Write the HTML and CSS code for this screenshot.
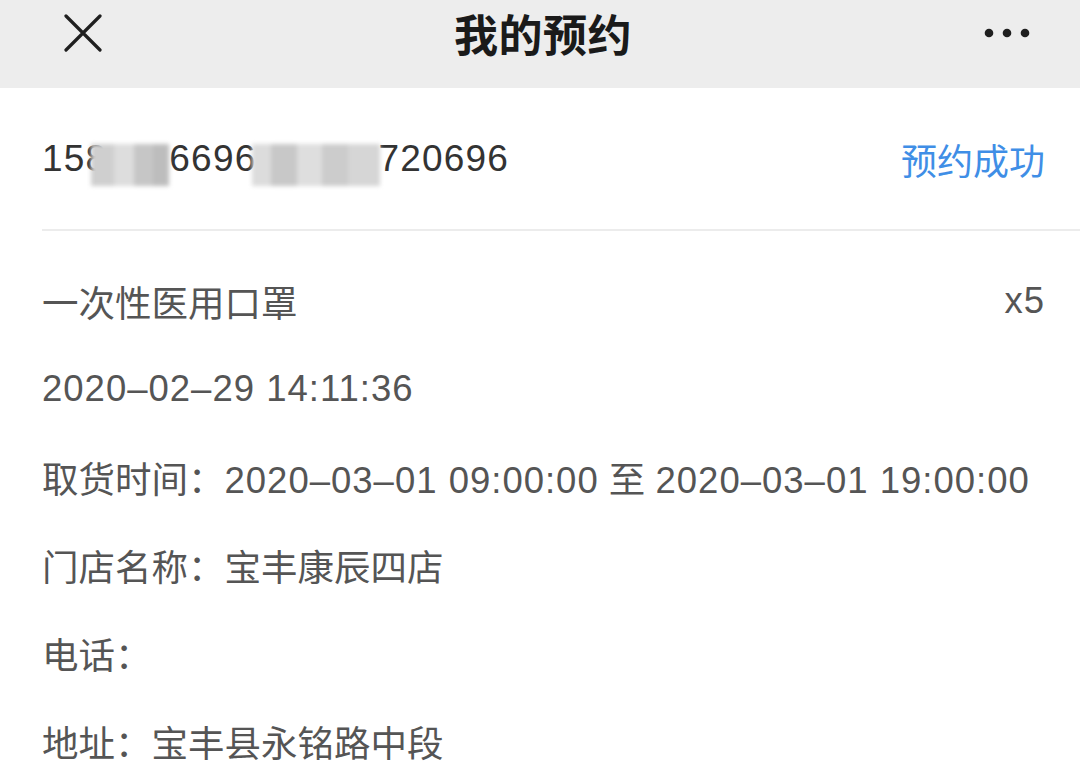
FILE: index.html
```html
<!DOCTYPE html>
<html lang="zh-CN">

<head>
    <meta charset="UTF-8">
    <title>我的预约</title>
    <link rel="stylesheet" href="styles.css">
</head>

<body>
    <div class="navbar">
        <div class="nav-inner">
            <span class="nav-close">
                <svg width="38" height="38" viewBox="0 0 38 38">
                    <path d="M2 2 L36 36 M36 2 L2 36" stroke="#1f1f1f" stroke-width="3.2" stroke-linecap="round" fill="none"/>
                </svg>
            </span>
            <h1 class="nav-title">我的预约</h1>
            <span class="nav-more">
                <svg width="46" height="10" viewBox="0 0 46 10">
                    <circle cx="5" cy="5" r="4.3" fill="#1f1f1f"/>
                    <circle cx="23" cy="5" r="4.3" fill="#1f1f1f"/>
                    <circle cx="41" cy="5" r="4.3" fill="#1f1f1f"/>
                </svg>
            </span>
        </div>
    </div>

    <div class="order">
        <div class="order-head">
            <span class="order-no">158<span class="mosaic mosaic-a"></span>6696<span class="mosaic mosaic-b"></span>720696</span>
            <span class="order-status">预约成功</span>
        </div>

        <div class="row">
            <span>一次性医用口罩</span>
            <span class="num">x5</span>
        </div>
        <div class="row"><span class="num">2020–02–29 14:11:36</span></div>
        <div class="row"><span>取货时间：<span class="num">2020–03–01 09:00:00</span> 至 <span class="num">2020–03–01 19:00:00</span></span></div>
        <div class="row">门店名称：宝丰康辰四店</div>
        <div class="row">电话：</div>
        <div class="row">地址：宝丰县永铭路中段</div>
    </div>
</body>

</html>
```

FILE: styles.css
```css
* {
    box-sizing: border-box;
}

body {
    margin: 0;
    padding: 0;
    background: #fff;
    font-family: "Liberation Sans", "Noto Sans CJK SC", sans-serif;
    overflow: hidden;
}

.navbar {
    height: 88px;
    background-color: #ededed;
}

.nav-inner {
    height: 66px;
    display: flex;
    align-items: center;
    justify-content: space-between;
    padding: 0 50px 0 64px;
}

.nav-close {
    display: flex;
    width: 38px;
}

.nav-title {
    margin: 0;
    font-size: 44px;
    font-weight: 600;
    color: #1a1a1a;
    letter-spacing: 0.5px;
}

.nav-more {
    display: flex;
    width: 46px;
}

.order {
    padding-left: 42px;
}

.order-head {
    height: 143px;
    display: flex;
    align-items: center;
    justify-content: space-between;
    padding-right: 35px;
    border-bottom: 2px solid #ececec;
}

.order-no {
    font-size: 37px;
    color: #333;
    letter-spacing: 1.2px;
    display: flex;
    align-items: center;
}

.mosaic {
    display: inline-block;
    height: 42px;
    margin-top: 12px;
    filter: blur(2px);
}

.mosaic-a {
    width: 78px;
    margin-left: -16px;
    background: linear-gradient(90deg, #cfcfcf 0 30%, #dddddd 30% 55%, #c6c6c6 55% 80%, #bdbdbd 80%);
}

.mosaic-b {
    width: 128px;
    margin-left: -4px;
    margin-right: -2px;
    background: linear-gradient(90deg, #dcdcdc 0 15%, #c8c8c8 15% 35%, #dedede 35% 55%, #cccccc 55% 75%, #d6d6d6 75%);
}

.order-status {
    font-size: 36px;
    color: #3f8ee6;
}

.order-head + .row {
    margin-top: 26px;
}

.row {
    height: 88px;
    display: flex;
    align-items: center;
    justify-content: space-between;
    padding-right: 35px;
    font-size: 36.5px;
    color: #555;
}

.num {
    letter-spacing: 1px;
}
```
